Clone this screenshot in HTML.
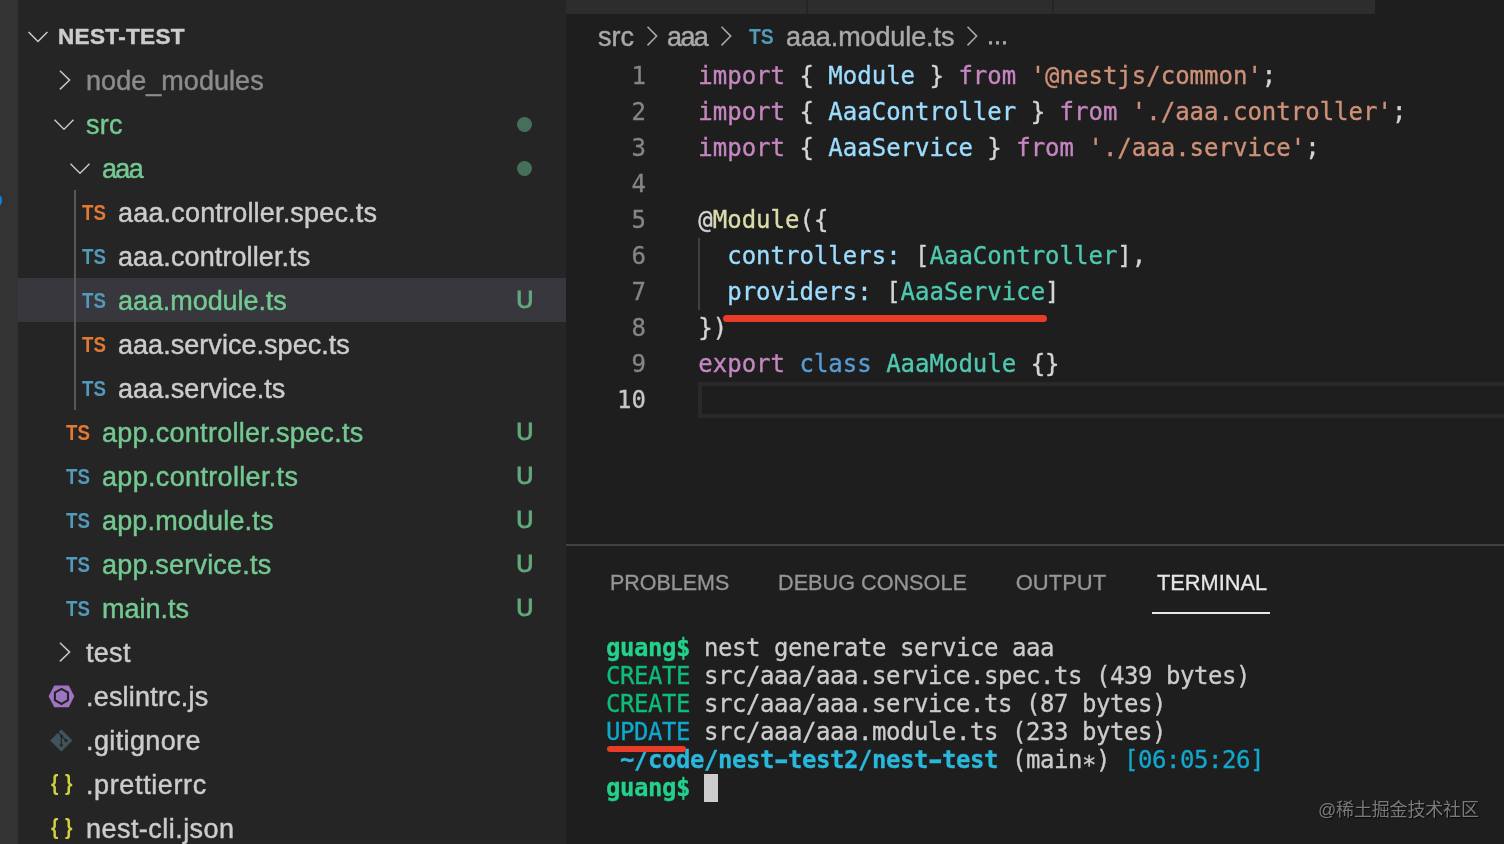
<!DOCTYPE html>
<html lang="en">
<head>
<meta charset="utf-8">
<title>nest-test</title>
<style>
*{box-sizing:border-box;margin:0;padding:0}
html,body{width:1504px;height:844px;overflow:hidden;background:#1e1e1e}
body{position:relative;font-family:"Liberation Sans","Noto Sans CJK SC",sans-serif;color:#ccc}
.abs{position:absolute}
#activity{left:0;top:0;width:18px;height:844px;background:#333333}
#badge{left:-15px;top:191.5px;width:17px;height:17px;border-radius:50%;background:#0a84dd}
#sidebar{will-change:transform;left:18px;top:0;width:548px;height:844px;background:#252526;overflow:hidden}
.row{position:absolute;left:0;width:548px;height:44px;line-height:44px;font-size:27px;letter-spacing:0.2px;white-space:nowrap;color:#cccccc}
.row .lbl{position:absolute;top:1px;-webkit-text-stroke:0.45px currentColor}
.row.sel{background:#37373d}
.g{color:#73c991}
.dim{color:#8c8c8c}
.u{position:absolute;left:496.8px;top:0px;font-size:23.5px;color:#62aa7d;width:20px;text-align:center;-webkit-text-stroke:0.9px currentColor;letter-spacing:0}
.dot{position:absolute;left:498.6px;top:14.5px;width:15px;height:15px;border-radius:50%;background:#466f59}
.ts{position:absolute;top:0.5px;margin-left:-0.5px;font-size:22px;font-weight:bold;letter-spacing:0;color:#519aba;display:inline-block;transform:scaleX(0.85);transform-origin:0 50%}
.ts.sp{color:#e37933}
.chev{position:absolute;top:0;left:0}
#guide{left:56px;top:190px;width:2px;height:220px;background:#585858}
#editor{will-change:transform;left:566px;top:0;width:938px;height:844px;background:#1e1e1e;overflow:hidden}
#tabs{left:0;top:0;width:809px;height:14px;background:#2d2d2d}
.tsep{top:0;width:2px;height:14px;background:#252526}
#crumbs{left:0;top:14px;height:46px;line-height:46px;font-size:27px;color:#a9a9a9;white-space:nowrap}
#crumbs span{position:absolute;top:0;-webkit-text-stroke:0.45px currentColor}
.ln{position:absolute;left:0;margin-top:1px;-webkit-text-stroke:0.3px currentColor;width:80px;text-align:right;height:36px;line-height:36px;font-family:"DejaVu Sans Mono","Liberation Mono",monospace;font-size:24px;color:#858585}
.cl{position:absolute;left:132.3px;margin-top:1px;-webkit-text-stroke:0.35px currentColor;height:36px;line-height:36px;font-family:"DejaVu Sans Mono","Liberation Mono",monospace;font-size:24px;white-space:pre;color:#d4d4d4;letter-spacing:0}
.k{color:#c586c0}.v{color:#9cdcfe}.s{color:#ce9178}.f{color:#dcdcaa}.t{color:#4ec9b0}.b{color:#569cd6}
#curline{left:132px;top:382px;width:820px;height:36px;border:4px solid #292929}
#iguide{left:132px;top:238px;width:2px;height:72px;background:#404040}
#panelborder{left:0;top:544px;width:938px;height:2px;background:#414141}
.ptab{position:absolute;top:566.5px;height:32px;line-height:32px;font-size:22px;transform-origin:0 50%;color:#969696;white-space:nowrap;-webkit-text-stroke:0.3px currentColor}
.ptab.act{color:#e7e7e7}
#tul{left:586px;top:612px;width:118px;height:2px;background:#e7e7e7}
.tl{position:absolute;left:40px;margin-top:1px;-webkit-text-stroke:0.3px currentColor;height:28px;line-height:28px;font-family:"DejaVu Sans Mono","Liberation Mono",monospace;font-size:24px;white-space:pre;color:#cccccc;letter-spacing:-0.45px}
.tg{color:#23d18b;font-weight:bold}
.tc{color:#0dbc79}
.tu{color:#11a8cd}
.tp{color:#29b8db;font-weight:bold}
#cursor{left:138px;top:774px;width:14px;height:28px;background:#cccccc}
.red{position:absolute;height:6px;border-radius:3px;background:#e63c28}
#wm{left:752px;top:797.5px;font-size:18px;line-height:24px;color:#7a7a7a;white-space:nowrap;letter-spacing:-0.17px;text-shadow:1px 1px 1px rgba(0,0,0,0.7)}
</style>
</head>
<body>
<div id="activity" class="abs"><div id="badge" class="abs"></div></div>

<div id="sidebar" class="abs">
  <!-- rows inserted below -->
  <div class="row" style="top:14px"><svg class="chev" width="60" height="44"><path d="M10.6 18 L19.95 27.5 L29.4 18" fill="none" stroke="#cccccc" stroke-width="1.5"/></svg><span class="lbl" style="left:40px;font-size:22.5px;font-weight:bold;color:#cccccc;letter-spacing:0.35px">NEST-TEST</span></div>
  <div class="row" style="top:58px"><svg class="chev" width="80" height="44"><path d="M41.9 12.8 L51.6 22.1 L41.9 31.4" fill="none" stroke="#c5c5c5" stroke-width="1.5"/></svg><span class="lbl dim" style="left:68px;letter-spacing:0.05px">node_modules</span></div>
  <div class="row" style="top:102px"><svg class="chev" width="80" height="44"><path d="M36.5 17.8 L46 27.3 L55.5 17.8" fill="none" stroke="#c5c5c5" stroke-width="1.5"/></svg><span class="lbl g" style="left:68px;letter-spacing:0.2px">src</span><span class="dot"></span></div>
  <div class="row" style="top:146px"><svg class="chev" width="90" height="44"><path d="M52.5 17.7 L62 27.2 L71.5 17.7" fill="none" stroke="#c5c5c5" stroke-width="1.5"/></svg><span class="lbl g" style="left:84px;letter-spacing:-1.7px">aaa</span><span class="dot"></span></div>
  <div class="row" style="top:190px"><span class="ts sp" style="left:64px">TS</span><span class="lbl" style="left:100px;letter-spacing:0.18px">aaa.controller.spec.ts</span></div>
  <div class="row" style="top:234px"><span class="ts" style="left:64px">TS</span><span class="lbl" style="left:100px;letter-spacing:0.1px">aaa.controller.ts</span></div>
  <div class="row sel" style="top:278px"><span class="ts" style="left:64px">TS</span><span class="lbl g" style="left:100px;letter-spacing:-0.07px">aaa.module.ts</span><span class="u">U</span></div>
  <div class="row" style="top:322px"><span class="ts sp" style="left:64px">TS</span><span class="lbl" style="left:100px;letter-spacing:0.04px">aaa.service.spec.ts</span></div>
  <div class="row" style="top:366px"><span class="ts" style="left:64px">TS</span><span class="lbl" style="left:100px;letter-spacing:0.06px">aaa.service.ts</span></div>
  <div class="row" style="top:410px"><span class="ts sp" style="left:48px">TS</span><span class="lbl g" style="left:84px;letter-spacing:0.29px">app.controller.spec.ts</span><span class="u">U</span></div>
  <div class="row" style="top:454px"><span class="ts" style="left:48px">TS</span><span class="lbl g" style="left:84px;letter-spacing:0.33px">app.controller.ts</span><span class="u">U</span></div>
  <div class="row" style="top:498px"><span class="ts" style="left:48px">TS</span><span class="lbl g" style="left:84px;letter-spacing:0.15px">app.module.ts</span><span class="u">U</span></div>
  <div class="row" style="top:542px"><span class="ts" style="left:48px">TS</span><span class="lbl g" style="left:84px;letter-spacing:0.2px">app.service.ts</span><span class="u">U</span></div>
  <div class="row" style="top:586px"><span class="ts" style="left:48px">TS</span><span class="lbl g" style="left:84px;letter-spacing:0.0px">main.ts</span><span class="u">U</span></div>
  <div class="row" style="top:630px"><svg class="chev" width="80" height="44"><path d="M41.9 12.8 L51.6 22.1 L41.9 31.4" fill="none" stroke="#c5c5c5" stroke-width="1.5"/></svg><span class="lbl" style="left:68px;letter-spacing:0.3px">test</span></div>
  <div class="row" style="top:674px"><svg class="chev" width="60" height="44"><path d="M30.6 22.3 L36.3 11.4 L50.8 11.4 L56.3 22.3 L50.8 33.3 L36.3 33.3 Z" fill="#a074c4"/><path d="M43.45 14.85 L49.99 18.62 L49.99 26.18 L43.45 29.95 L36.91 26.18 L36.91 18.62 Z" fill="none" stroke="#252526" stroke-width="2.1" stroke-linejoin="miter"/></svg><span class="lbl" style="left:68px;letter-spacing:0.2px">.eslintrc.js</span></div>
  <div class="row" style="top:718px"><svg class="chev" width="60" height="44"><path d="M32.4 22.5 L43.3 11.5 L54.2 22.5 L43.3 33.5 Z" fill="#41535b" stroke="#41535b" stroke-width="0.4" stroke-linejoin="round"/><path d="M39.3 13.6 L48.1 22.6 M43.5 17.9 L43.3 27.1" stroke="#252526" stroke-width="1.1" fill="none"/><circle cx="43.6" cy="17.9" r="1.5" fill="#252526"/><circle cx="43.3" cy="27.1" r="1.6" fill="#252526"/><circle cx="48.1" cy="22.6" r="1.6" fill="#252526"/></svg><span class="lbl" style="left:68px;letter-spacing:0.38px">.gitignore</span></div>
  <div class="row" style="top:762px"><span class="lbl" style="left:32.8px;top:-1px;font-size:22px;font-weight:bold;color:#d0d040;letter-spacing:0.65px;display:inline-block;transform:scaleX(0.87);transform-origin:0 50%;-webkit-text-stroke:0;white-space:pre">{ }</span><span class="lbl" style="left:68px;letter-spacing:0.62px">.prettierrc</span></div>
  <div class="row" style="top:806px"><span class="lbl" style="left:32.8px;top:-1px;font-size:22px;font-weight:bold;color:#d0d040;letter-spacing:0.65px;display:inline-block;transform:scaleX(0.87);transform-origin:0 50%;-webkit-text-stroke:0;white-space:pre">{ }</span><span class="lbl" style="left:68px;letter-spacing:0.46px">nest-cli.json</span></div>
  <div id="guide" class="abs"></div>
</div>

<div id="editor" class="abs">
  <div id="tabs" class="abs"></div>
  <div class="abs tsep" style="left:240px"></div>
  <div class="abs tsep" style="left:486px"></div>
  <div id="crumbs" class="abs">
    <span style="left:32px">src</span>
    <svg class="abs" style="left:74px;top:0" width="30" height="46"><path d="M7.5 12.8 L16.7 22.1 L7.5 31.4" fill="none" stroke="#a9a9a9" stroke-width="1.5"/></svg>
    <span style="left:101px;letter-spacing:-1.6px">aaa</span>
    <svg class="abs" style="left:148px;top:0" width="30" height="46"><path d="M7.5 12.8 L16.7 22.1 L7.5 31.4" fill="none" stroke="#a9a9a9" stroke-width="1.5"/></svg>
    <span style="left:183px;top:0px;font-size:22px;font-weight:bold;color:#519aba;display:inline-block;transform:scaleX(0.88);transform-origin:0 50%;-webkit-text-stroke:0">TS</span>
    <span style="left:220px;letter-spacing:-0.1px">aaa.module.ts</span>
    <svg class="abs" style="left:394px;top:0" width="30" height="46"><path d="M7.5 12.8 L16.7 22.1 L7.5 31.4" fill="none" stroke="#a9a9a9" stroke-width="1.5"/></svg>
    <span style="left:420.6px;font-size:22px;-webkit-text-stroke:0.9px currentColor">…</span>
  </div>

  <div id="curline" class="abs"></div>
  <div id="iguide" class="abs"></div>

  <div class="ln" style="top:57px">1</div>
  <div class="ln" style="top:93px">2</div>
  <div class="ln" style="top:129px">3</div>
  <div class="ln" style="top:165px">4</div>
  <div class="ln" style="top:201px">5</div>
  <div class="ln" style="top:237px">6</div>
  <div class="ln" style="top:273px">7</div>
  <div class="ln" style="top:309px">8</div>
  <div class="ln" style="top:345px">9</div>
  <div class="ln" style="top:381px;color:#c6c6c6">10</div>

  <div class="cl" style="top:57px"><span class="k">import</span> { <span class="v">Module</span> } <span class="k">from</span> <span class="s">'@nestjs/common'</span>;</div>
  <div class="cl" style="top:93px"><span class="k">import</span> { <span class="v">AaaController</span> } <span class="k">from</span> <span class="s">'./aaa.controller'</span>;</div>
  <div class="cl" style="top:129px"><span class="k">import</span> { <span class="v">AaaService</span> } <span class="k">from</span> <span class="s">'./aaa.service'</span>;</div>
  <div class="cl" style="top:201px">@<span class="f">Module</span>({</div>
  <div class="cl" style="top:237px">  <span class="v">controllers</span><span class="v">:</span> [<span class="t">AaaController</span>],</div>
  <div class="cl" style="top:273px">  <span class="v">providers</span><span class="v">:</span> [<span class="t">AaaService</span>]</div>
  <div class="cl" style="top:309px">})</div>
  <div class="cl" style="top:345px"><span class="k">export</span> <span class="b">class</span> <span class="t">AaaModule</span> {}</div>
  <div class="red" style="left:157px;top:315.3px;width:324px;height:7px;border-radius:3.5px"></div>

  <div id="panelborder" class="abs"></div>
  <div class="ptab" style="left:44.2px;transform:scaleX(0.976)">PROBLEMS</div>
  <div class="ptab" style="left:211.7px;transform:scaleX(0.984)">DEBUG CONSOLE</div>
  <div class="ptab" style="left:449.7px;transform:scaleX(1)">OUTPUT</div>
  <div class="ptab act" style="left:590.6px;transform:scaleX(0.99)">TERMINAL</div>
  <div id="tul" class="abs"></div>

  <div class="tl" style="top:633px"><span class="tg">guang$</span> nest generate service aaa</div>
  <div class="tl" style="top:661px"><span class="tc">CREATE</span> src/aaa/aaa.service.spec.ts (439 bytes)</div>
  <div class="tl" style="top:689px"><span class="tc">CREATE</span> src/aaa/aaa.service.ts (87 bytes)</div>
  <div class="tl" style="top:717px"><span class="tu">UPDATE</span> src/aaa/aaa.module.ts (233 bytes)</div>
  <div class="tl" style="top:745px"> <span class="tp">~/code/nest<span style="display:inline-block;transform:scaleX(1.5)">-</span>test2/nest<span style="display:inline-block;transform:scaleX(1.5)">-</span>test</span> (main<span style="position:relative;top:5px">*</span>) <span class="tu">[06:05:26]</span></div>
  <div class="tl" style="top:773px"><span class="tg">guang$</span> </div>
  <div id="cursor" class="abs"></div>
  <div class="red" style="left:41px;top:746.3px;width:79px;height:6px"></div>

  <div id="wm" class="abs">@稀土掘金技术社区</div>
</div>
</body>
</html>
